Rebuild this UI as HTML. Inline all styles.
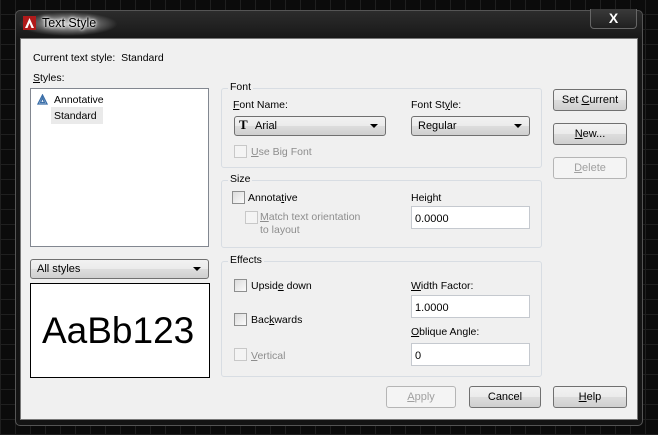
<!DOCTYPE html>
<html><head><meta charset="utf-8"><style>
*{box-sizing:border-box;margin:0;padding:0}
body{width:658px;height:435px;overflow:hidden;position:relative;font-family:"Liberation Sans",sans-serif;font-size:10.5px;color:#000;
background-color:#0b0b0b;
background-image:repeating-linear-gradient(90deg,#1f1f1f 0 1px,transparent 1px 15px),repeating-linear-gradient(0deg,#1f1f1f 0 1px,transparent 1px 15px);}
.a{position:absolute;white-space:nowrap}
.win{position:absolute;left:15px;top:10px;width:628px;height:416px;border:1px solid #555;border-radius:5px;background:linear-gradient(#2c2c2c,#161616 30px,#141414);}
.client{position:absolute;left:20px;top:38px;width:618px;height:382px;background:#f0f0f0;border:1px solid #777;}
.grp{position:absolute;border:1px solid #d8dde3;border-radius:3px}
.lg{position:absolute;background:#f0f0f0;padding:0 2px;top:-8px;left:6px}
.btn{position:absolute;height:22px;border:1px solid #707070;border-radius:3px;background:linear-gradient(#f2f2f2,#ebebeb 50%,#dddddd 51%,#cfcfcf);text-align:center;line-height:21px;font-size:11px}
.btn.dis{border-color:#b5b5b5;color:#a0a0a0;background:#f4f4f4}
.combo{position:absolute;height:20px;border:1px solid #707070;border-radius:3px;background:linear-gradient(#f2f2f2,#ebebeb 50%,#dddddd 51%,#cfcfcf);line-height:19px;padding-left:6px;font-size:11px}
.combo:after{content:"";position:absolute;right:7px;top:7px;border-left:4px solid transparent;border-right:4px solid transparent;border-top:4px solid #000}
.inp{position:absolute;height:23px;border:1px solid #c5c9cf;background:#fff;padding:6px 3px;font-size:11px}
.cb{position:absolute;width:13px;height:13px;border:1px solid #8e8f8f;background:linear-gradient(135deg,#dcdcdc,#fbfbfb)}
.cb.dis{border-color:#c8c8c8;background:#f4f4f4}
.gr{color:#8d8d8d}
u{text-decoration:underline}
</style></head><body>
<div class="win"></div>
<div class="a" style="left:18px;top:12px;width:100px;height:24px;background:radial-gradient(ellipse at center,rgba(255,255,255,.75),rgba(255,255,255,0) 70%)"></div>
<svg class="a" style="left:23px;top:16px" width="13" height="14" viewBox="0 0 13 14"><rect width="13" height="14" fill="#b01b1b"/><path d="M6.5 2 L11 12 H8.5 L6.5 7 L4.5 12 H2 Z" fill="#fff"/></svg>
<div class="a" style="left:42px;top:16px;font-size:12.5px;color:#000;text-shadow:0 0 6px #fff,0 0 3px #fff,0 0 2px #fff">Text Style</div>
<div class="a" style="left:590px;top:9px;width:47px;height:20px;border:1px solid #666;border-top:none;border-radius:0 0 4px 4px;background:linear-gradient(#3a3a3a,#202020);color:#fff;text-align:center;font-weight:bold;font-size:14px;line-height:18px">X</div>
<div class="client"></div>
<div class="a" style="left:33px;top:52px">Current text style:&nbsp; Standard</div>
<div class="a" style="left:33px;top:72px"><u>S</u>tyles:</div>
<div class="a" style="left:30px;top:88px;width:179px;height:159px;background:#fff;border:1px solid #828790"></div>
<svg class="a" style="left:37px;top:94px" width="11" height="11" viewBox="0 0 11 11"><path d="M5.5 1 L10 10 H1 Z M5.5 4 L3.5 8.5 H7.5 Z" fill="none" stroke="#3a6ea8" stroke-width="1.3"/></svg>
<div class="a" style="left:54px;top:94px">Annotative</div>
<div class="a" style="left:51px;top:107px;width:52px;height:17px;background:#eaeaea"></div>
<div class="a" style="left:54px;top:110px">Standard</div>
<div class="combo" style="left:30px;top:259px;width:179px">All styles</div>
<div class="a" style="left:30px;top:283px;width:180px;height:95px;background:#fff;border:1px solid #000"></div>
<div class="a" style="left:42px;top:309px;font-size:37px;line-height:44px">AaBb123</div>

<div class="grp" style="left:221px;top:88px;width:321px;height:80px"><span class="lg">Font</span></div>
<div class="a" style="left:233px;top:99px"><u>F</u>ont Name:</div>
<div class="combo" style="left:234px;top:116px;width:152px;padding-left:20px">Arial</div>
<div class="a" style="left:239px;top:117px;font-family:'Liberation Serif',serif;font-size:13px;font-weight:bold">T</div>
<div class="a" style="left:411px;top:99px">Font St<u>y</u>le:</div>
<div class="combo" style="left:411px;top:116px;width:119px">Regular</div>
<div class="cb dis" style="left:234px;top:145px"></div>
<div class="a gr" style="left:251px;top:146px"><u>U</u>se Big Font</div>

<div class="grp" style="left:221px;top:180px;width:321px;height:68px"><span class="lg">Size</span></div>
<div class="cb" style="left:232px;top:191px"></div>
<div class="a" style="left:248px;top:192px">Annota<u>t</u>ive</div>
<div class="cb dis" style="left:245px;top:211px"></div>
<div class="a gr" style="left:260px;top:211px;line-height:13px"><u>M</u>atch text orientation<br>to layout</div>
<div class="a" style="left:411px;top:192px">Height<u> </u></div>
<div class="inp" style="left:411px;top:206px;width:119px">0.0000</div>

<div class="grp" style="left:221px;top:261px;width:321px;height:116px"><span class="lg">Effects</span></div>
<div class="cb" style="left:234px;top:279px"></div>
<div class="a" style="left:251px;top:280px">Upsid<u>e</u> down</div>
<div class="cb" style="left:234px;top:313px"></div>
<div class="a" style="left:251px;top:314px">Bac<u>k</u>wards</div>
<div class="cb dis" style="left:234px;top:348px"></div>
<div class="a gr" style="left:251px;top:350px"><u>V</u>ertical</div>
<div class="a" style="left:411px;top:280px"><u>W</u>idth Factor:</div>
<div class="inp" style="left:411px;top:295px;width:119px">1.0000</div>
<div class="a" style="left:411px;top:326px"><u>O</u>blique Angle:</div>
<div class="inp" style="left:411px;top:343px;width:119px">0</div>

<div class="btn" style="left:553px;top:89px;width:74px">Set <u>C</u>urrent</div>
<div class="btn" style="left:553px;top:123px;width:74px"><u>N</u>ew...</div>
<div class="btn dis" style="left:553px;top:157px;width:74px"><u>D</u>elete</div>
<div class="btn dis" style="left:386px;top:386px;width:70px"><u>A</u>pply</div>
<div class="btn" style="left:469px;top:386px;width:72px">Cancel</div>
<div class="btn" style="left:553px;top:386px;width:74px"><u>H</u>elp</div>
</body></html>
